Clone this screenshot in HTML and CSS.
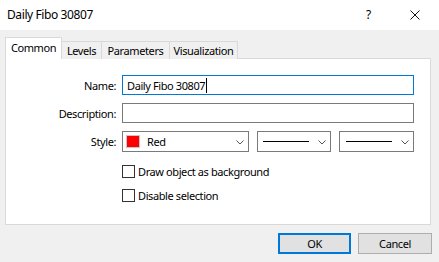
FILE: index.html
```html
<!DOCTYPE html>
<html>
<head>
<meta charset="utf-8">
<link rel="stylesheet" href="styles.css">
</head>
<body>
<div class="dialog">
  <div class="titlebar">
    <span class="title">Daily Fibo 30807</span>
    <span class="help">?</span>
    <span class="close">
      <svg width="10" height="10" viewBox="0 0 10 10"><path d="M0.5 0.5 L9.5 9.5 M9.5 0.5 L0.5 9.5" stroke="#111" stroke-width="1" fill="none"/></svg>
    </span>
  </div>
  <div class="main">
    <div class="tabs">
      <div class="tab active t-common">Common</div>
      <div class="tab t-levels">Levels</div>
      <div class="tab t-params">Parameters</div>
      <div class="tab t-vis">Visualization</div>
    </div>
    <div class="panel">
      <div class="form">
        <label class="lbl">Name:</label>
        <div class="field focus"><span class="val">Daily Fibo 30807</span><span class="caret"></span></div>
        <label class="lbl">Description:</label>
        <div class="field"></div>
        <label class="lbl">Style:</label>
        <div class="style-row">
          <div class="combo color">
            <span class="swatch"></span><span class="val">Red</span>
            <svg class="chev" width="8" height="5" viewBox="0 0 8 5"><path d="M0.5 0.5 L4 4 L7.5 0.5" stroke="#555" fill="none"/></svg>
          </div>
          <div class="combo line">
            <span class="dash"></span>
            <svg class="chev" width="8" height="5" viewBox="0 0 8 5"><path d="M0.5 0.5 L4 4 L7.5 0.5" stroke="#555" fill="none"/></svg>
          </div>
          <div class="combo line wide">
            <span class="dash"></span>
            <svg class="chev" width="8" height="5" viewBox="0 0 8 5"><path d="M0.5 0.5 L4 4 L7.5 0.5" stroke="#555" fill="none"/></svg>
          </div>
        </div>
        <span></span>
        <div class="checks">
          <div class="check"><span class="box"></span><span>Draw object as background</span></div>
          <div class="check"><span class="box"></span><span>Disable selection</span></div>
        </div>
      </div>
    </div>
    <div class="footer">
      <button class="btn default">OK</button>
      <button class="btn">Cancel</button>
    </div>
  </div>
</div>
</body>
</html>
```
FILE: styles.css
```css
html, body {
  margin: 0;
  padding: 0;
}
body {
  width: 439px;
  height: 262px;
  background: #f0f0f0;
  font-family: "Noto Sans", "Open Sans", sans-serif;
  font-size: 11px;
  letter-spacing: -0.4px;
  color: #000;
  overflow: hidden;
}
.dialog {
  width: 439px;
  height: 262px;
}
.titlebar {
  height: 30px;
  background: #fff;
  display: flex;
  align-items: center;
  padding-left: 7px;
}
.title {
  font-size: 12px;
  flex: 1;
  position: relative;
  top: -1px;
}
.help {
  font-size: 12px;
  width: 10px;
  margin-right: 34px;
  position: relative;
  top: -1px;
}
.close {
  width: 10px;
  height: 10px;
  margin-right: 19px;
  display: flex;
}
.main {
  padding: 7px 8px 0 5px;
}
.tabs {
  display: flex;
  align-items: flex-end;
  height: 22px;
  margin-bottom: -1px;
  position: relative;
  z-index: 1;
}
.tab {
  height: 18px;
  line-height: 17px;
  text-align: center;
  white-space: nowrap;
  border: 1px solid #d9d9d9;
  border-bottom: none;
  margin-left: -1px;
  background: #f0f0f0;
  box-sizing: border-box;
}
.tab.active {
  height: 22px;
  line-height: 19px;
  margin-left: 0;
  background: #fff;
  position: relative;
  z-index: 2;
}
.t-common { width: 57px; }
.t-levels { width: 41px; }
.t-params { width: 69px; }
.t-vis { width: 69px; }
.panel {
  height: 167px;
  box-sizing: border-box;
  border: 1px solid #d9d9d9;
  background: #fff;
  padding: 16px 16px 0 0;
}
.form {
  display: grid;
  grid-template-columns: 110px 1fr;
  column-gap: 6px;
  row-gap: 8px;
  align-items: center;
}
.lbl {
  text-align: right;
}
.field {
  height: 20px;
  box-sizing: border-box;
  border: 1px solid #7a7a7a;
  display: flex;
  align-items: center;
  padding-left: 4px;
}
.field.focus {
  border-color: #0078d7;
}
.caret {
  width: 1px;
  height: 15px;
  background: #000;
  margin-left: 1px;
}
.style-row {
  display: flex;
  gap: 8px;
}
.combo {
  height: 21px;
  box-sizing: border-box;
  border: 1px solid #7a7a7a;
  display: flex;
  align-items: center;
  position: relative;
}
.combo.color {
  width: 127px;
  padding-left: 3px;
}
.combo.line {
  width: 74px;
  padding-left: 5px;
}
.combo.line.wide {
  width: 75px;
  padding-left: 6px;
}
.swatch {
  width: 14px;
  height: 13px;
  background: #ff0000;
  box-sizing: border-box;
  border: 1px solid #c8c8c8;
  margin-right: 7px;
}
.dash {
  width: 46px;
  height: 1px;
  background: #000;
}
.chev {
  position: absolute;
  right: 4px;
  top: 8px;
}
.checks {
  display: flex;
  flex-direction: column;
  gap: 10px;
  margin-top: 4px;
}
.check {
  display: flex;
  align-items: center;
  height: 14px;
}
.box {
  width: 13px;
  height: 13px;
  box-sizing: border-box;
  border: 1px solid #333;
  background: #fff;
  margin-right: 3px;
}
.footer {
  display: flex;
  justify-content: flex-end;
  gap: 7px;
  padding-top: 8px;
  margin-right: -1px;
}
.btn {
  width: 74px;
  height: 21px;
  box-sizing: border-box;
  border: 1px solid #adadad;
  background: #e1e1e1;
  font-family: inherit;
  font-size: 11px;
  letter-spacing: -0.4px;
  color: #000;
  padding: 0;
}
.btn.default {
  width: 73px;
  border: 2px solid #0078d7;
}
```
